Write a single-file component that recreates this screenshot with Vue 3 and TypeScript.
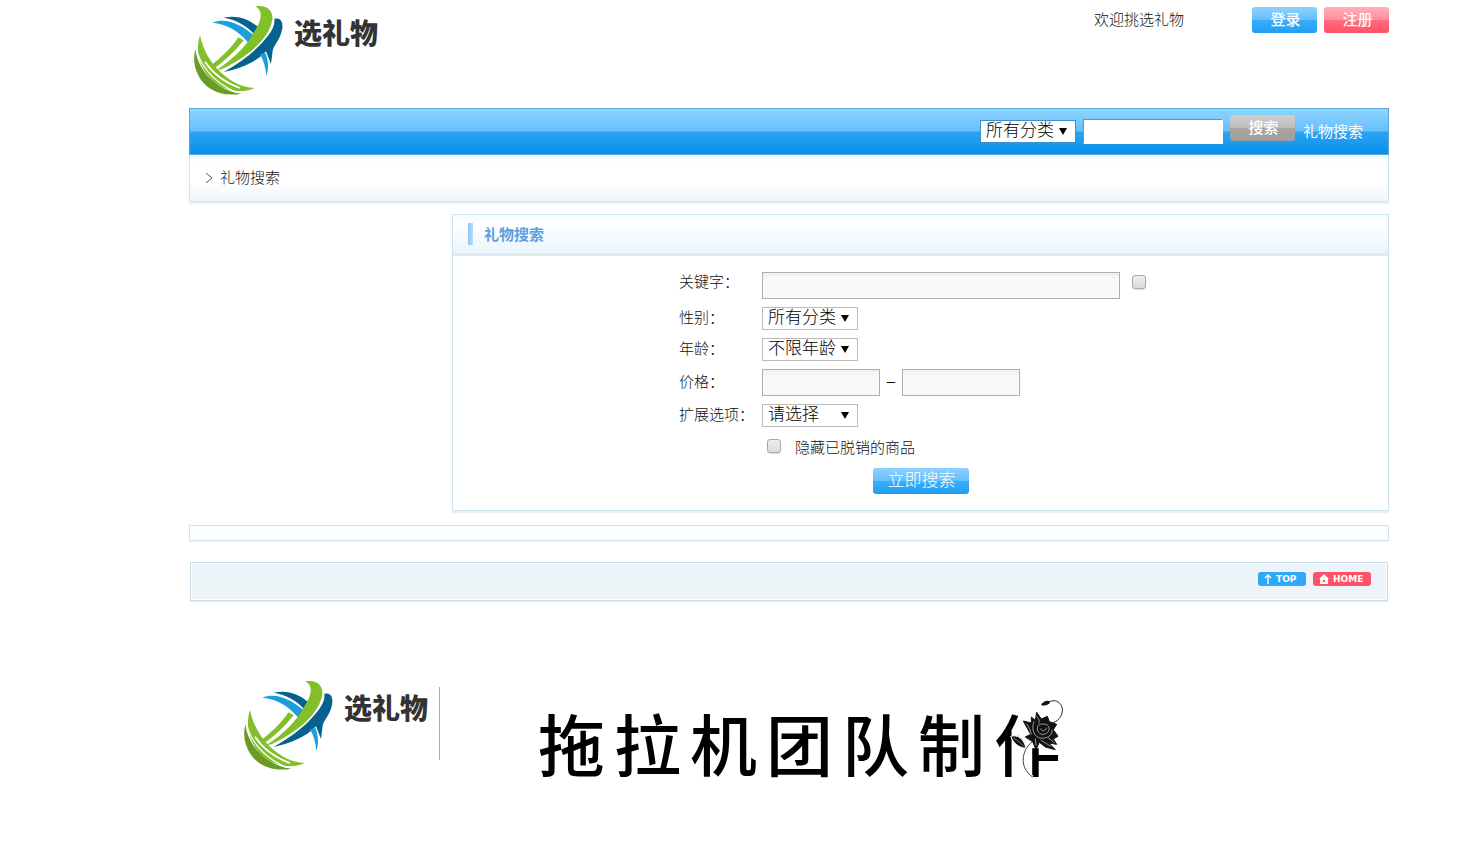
<script setup lang="ts">
import { defineComponent, h, ref } from 'vue'

const shapes: Array<[string, string]> = [
  ['#1a9fdc', 'M82 68C125 50 172 76 209 108L190 128C160 92 125 72 82 68Z'],
  ['#05628f', 'M116 53C155 44 194 56 222 84L209 104C185 76 155 60 116 53Z'],
  ['#83bf2b', 'M211 19C247 13 264 32 262 58C254 112 200 164 110 208L94 211C148 174 184 138 206 98C230 64 236 32 211 19Z'],
  ['#83bf2b', 'M160 112L176 121C150 154 120 182 88 205L80 195C113 168 141 142 160 112Z'],
  ['#05628f', 'M268 57C287 50 296 68 291 90C283 124 267 134 263 152L258 192L243 154C214 186 165 206 116 216C178 182 223 142 250 106C263 88 270 74 268 57Z'],
  ['#1a9fdc', 'M225 163L242 159C250 185 252 205 244 228C242 202 236 182 225 163Z'],
  ['#83bf2b', 'M45 105C54 150 76 188 110 220C140 246 168 262 209 264C166 284 116 272 80 240C42 202 30 152 45 105Z'],
  ['#6b9a25', 'M31 148C36 188 58 224 92 250C118 268 142 278 169 281C108 292 60 268 39 224C26 197 25 172 31 148Z'],
]

const BrandMark = defineComponent(() => () =>
  h(
    'svg',
    { viewBox: '12 0 288 300', width: 96, height: 100, 'aria-hidden': 'true' },
    [
      ...shapes.map(([fill, d]) => h('path', { fill, d })),
      h('path', { d: 'M33 138C40 188 80 246 156 278', fill: 'none', stroke: '#fff', 'stroke-width': 4 }),
      h('path', { d: 'M60 185C80 215 110 244 165 264', fill: 'none', stroke: '#fff', 'stroke-width': 5 }),
    ],
  ),
)

const category = ref('所有分类')
const gender = ref('所有分类')
const age = ref('不限年龄')
const extra = ref('请选择')
const credit = Array.from('拖拉机团队制作')
</script>

<template>
  <div class="page">
    <header class="top">
      <a class="brand" href="#"><BrandMark /><span class="brand-name">选礼物</span></a>
      <div class="account">
        <span class="welcome">欢迎挑选礼物</span>
        <button class="btn blue" type="button">登录</button>
        <button class="btn red" type="button">注册</button>
      </div>
    </header>

    <nav class="nav">
      <span class="select">
        <select v-model="category" aria-label="分类"><option>所有分类</option></select>
      </span>
      <input class="nav-input" type="text" aria-label="搜索">
      <button class="btn gray" type="button">搜索</button>
      <a class="nav-link" href="#">礼物搜索</a>
    </nav>

    <div class="crumb">
      <svg width="8" height="12" viewBox="0 0 8 12" aria-hidden="true"><path d="M1 1L7 6L1 11" fill="none" stroke="#555" /></svg>
      <span>礼物搜索</span>
    </div>

    <section class="panel">
      <h2 class="panel-title"><span>礼物搜索</span></h2>
      <form class="form" @submit.prevent>
        <div class="row first">
          <label for="kw">关键字：</label>
          <input id="kw" class="field wide" type="text">
          <input class="tick" type="checkbox" aria-label="扩展搜索">
        </div>
        <div class="row">
          <label for="gender">性别：</label>
          <span class="select"><select id="gender" v-model="gender"><option>所有分类</option></select></span>
        </div>
        <div class="row">
          <label for="age">年龄：</label>
          <span class="select"><select id="age" v-model="age"><option>不限年龄</option></select></span>
        </div>
        <div class="row">
          <label for="min">价格：</label>
          <input id="min" class="field" type="text">
          <span class="dash">–</span>
          <input class="field" type="text" aria-label="最高价格">
        </div>
        <div class="row">
          <label for="extra">扩展选项：</label>
          <span class="select"><select id="extra" v-model="extra"><option>请选择</option></select></span>
        </div>
        <div class="row hide-row">
          <input id="hide" class="tick" type="checkbox">
          <label for="hide">隐藏已脱销的商品</label>
        </div>
        <button class="btn blue submit" type="submit">立即搜索</button>
      </form>
    </section>

    <div class="strip"></div>

    <div class="footbar">
      <a class="chip chip-blue" href="#">
        <svg width="8" height="10" viewBox="0 0 8 10" aria-hidden="true"><path d="M4 10V1M1 4L4 1L7 4" fill="none" stroke="#fff" stroke-width="1.4" /></svg>
        <span>TOP</span>
      </a>
      <a class="chip chip-red" href="#">
        <svg width="10" height="10" viewBox="0 0 10 10" aria-hidden="true"><path d="M5 0L10 5H9V10H1V5H0ZM4 6V8H6V6Z" fill="#fff" fill-rule="evenodd" /></svg>
        <span>HOME</span>
      </a>
    </div>

    <footer class="foot">
      <a class="brand" href="#"><BrandMark /><span class="brand-name">选礼物</span></a>
      <span class="divider"></span>
      <p class="credit">
        <span v-for="c in credit" :key="c">{{ c }}</span>
        <svg class="flower" width="85" height="90" viewBox="0 0 255 270" aria-hidden="true">
          <path d="M98 46H236V178H166V160H128V150H98Z" fill="#fff" />
          <path d="M185 24C205 8 232 22 229 50C226 72 208 82 190 88" fill="none" stroke="#222" stroke-width="3" />
          <path d="M165 30C170 20 184 14 192 20C190 30 176 34 165 30Z" fill="#111" />
          <path d="M142 140C118 155 104 190 116 218C122 230 130 240 140 246" fill="none" stroke="#fff" stroke-width="9" />
          <path d="M144 136C116 155 104 190 116 218C122 230 130 240 140 246" fill="none" stroke="#444" stroke-width="3" />
          <path d="M74 124C94 118 114 130 120 160C100 158 84 148 74 124Z" fill="#111" stroke="#fff" stroke-width="3" />
          <path d="M82 129C94 135 104 144 113 154" fill="none" stroke="#aaa" stroke-width="2" />
          <path d="M152 52L166 72L184 64L190 80L212 88L202 104L216 124L202 132L212 148L188 144L208 164L178 156L160 142L150 164L140 140L118 126L134 118L112 78L136 84L136 66L148 76Z" fill="#111" stroke="#111" stroke-width="3" />
          <g fill="none" stroke="#ddd" stroke-width="2">
            <path d="M144 80C136 100 142 120 158 128C180 134 200 122 198 104" />
            <path d="M156 92C150 108 160 120 174 118C190 114 194 98 184 90C172 84 160 88 156 92Z" />
            <path d="M164 100C166 110 178 110 182 98M122 86C130 98 134 108 136 118M150 62C158 70 162 78 158 86" />
            <path d="M164 134C174 142 182 146 194 154M186 128C194 134 200 138 206 144M148 130L150 152" />
          </g>
        </svg>
      </p>
    </footer>
  </div>
</template>

<style>
body {
  margin: 0;
  background: #fff;
}
</style>

<style scoped>
.page {
  box-sizing: border-box;
  padding: 0 87px 0 189px;
  font: 300 15px/20px "Liberation Sans", "Noto Sans CJK SC", sans-serif;
  color: #111;
}

button,
input,
select {
  box-sizing: border-box;
  margin: 0;
  font-family: inherit;
}

a {
  text-decoration: none;
}

.top {
  display: flex;
  justify-content: space-between;
  align-items: flex-start;
  height: 108px;
}

.brand {
  display: flex;
  align-items: flex-start;
  gap: 9px;
}

.brand-name {
  padding-top: 20px;
  font-size: 28px;
  line-height: 30px;
  font-weight: 900;
  color: #333;
}

.account {
  display: flex;
  align-items: center;
  gap: 7px;
  padding-top: 7px;
}

.welcome {
  margin-right: 61px;
}

.btn {
  width: 65px;
  height: 26px;
  padding: 0 0 0 4px;
  border: 0;
  border-radius: 3px;
  color: #fff;
  font-size: 16px;
  line-height: 24px;
  font-weight: 700;
}

.blue {
  background: linear-gradient(#8fd1ff, #66bffd 48%, #3badf8 52%, #1f9ff5);
}

.red {
  background: linear-gradient(#ffb0bb, #ff8e9c 48%, #ff6b7e 52%, #ff5268);
}

.gray {
  margin: 0 1px 8px 0;
  background: linear-gradient(#cfcfcf, #bdbdbd 48%, #a8a5a3 52%, #a19d9a);
}

.account .btn,
.gray {
  padding-left: 2px;
  font-size: 15px;
  font-weight: 500;
}

.nav {
  box-sizing: border-box;
  display: flex;
  align-items: center;
  justify-content: flex-end;
  gap: 7px;
  height: 47px;
  padding: 0 25px 0 0;
  border: 1px solid #5aa9de;
  background: linear-gradient(#8fd4ff, #66c0fc 48%, #2ba4f3 52%, #0690ea);
}

.nav-input {
  width: 140px;
  height: 25px;
  border: 1px solid #3f9fe0;
  border-right-color: #fff;
  border-bottom-color: #fff;
  background: #fff;
}

.nav-link {
  color: #fff;
  font-weight: 400;
}

.select {
  position: relative;
  display: inline-flex;
}

.select::after {
  content: "";
  position: absolute;
  top: 8px;
  right: 9px;
  border: 4px solid transparent;
  border-top: 7px solid #000;
  border-bottom: 0;
  pointer-events: none;
}

select {
  width: 96px;
  height: 23px;
  padding: 0 0 2px 5px;
  border: 1px solid #bbb;
  border-radius: 0;
  appearance: none;
  background: #fff;
  color: #000;
  font-size: 17px;
  line-height: 20px;
  font-weight: 300;
}

.nav select {
  border-color: #3f8fcb;
}

.crumb {
  box-sizing: border-box;
  display: flex;
  align-items: center;
  gap: 7px;
  height: 47px;
  padding: 0 0 0 15px;
  border: 1px solid #cfe3ee;
  border-top: 0;
  background: linear-gradient(#eefaff, #fff 16%, #fff 60%, #eef6fd);
  box-shadow: 0 2px 1px #eef1f4;
}

.panel {
  box-sizing: border-box;
  margin: 12px 0 0 263px;
  border: 1px solid #cde4ef;
  box-shadow: 0 2px 1px #eaf0f4;
}

.panel-title {
  display: flex;
  align-items: center;
  gap: 11px;
  height: 38px;
  margin: 0;
  padding: 0 0 0 15px;
  border-bottom: 3px solid #e0eaf2;
  background: linear-gradient(#f4fbff, #fff 25%, #eaf5fd);
  color: #5e9fe2;
  font-size: 15px;
  font-weight: 700;
}

.panel-title span {
  padding-top: 2px;
}

.panel-title::before {
  content: "";
  width: 5px;
  height: 22px;
  background: linear-gradient(90deg, #8fc8f5, #b8dcf8);
}

.form {
  display: flex;
  flex-direction: column;
  gap: 8px;
  width: 483px;
  margin: 0 auto;
  padding: 16px 0;
}

.row {
  display: flex;
  align-items: center;
}

.row > label:first-child {
  width: 83px;
  padding-bottom: 2px;
}

.first {
  align-items: flex-start;
}

.first .tick {
  margin: 3px 0 0 12px;
}

.field {
  width: 118px;
  height: 27px;
  border: 1px solid #b0b0b0;
  background: linear-gradient(#efefef, #f9f9f9 25%);
}

.wide {
  width: 358px;
}

.dash {
  width: 22px;
  padding-bottom: 4px;
  text-align: center;
}

.tick {
  width: 14px;
  height: 14px;
  border: 1px solid #aaa;
  border-radius: 3px;
  appearance: none;
  background: linear-gradient(#ededed, #dcdcdc);
  box-shadow: 0 1px 1px #ddd;
}

.hide-row {
  gap: 14px;
  height: 25px;
  padding-left: 88px;
}

.hide-row .tick {
  margin-bottom: 3px;
}

.submit {
  align-self: center;
  width: 96px;
  padding: 0 0 0 2px;
  font-size: 17px;
  font-weight: 300;
}

.strip {
  box-sizing: border-box;
  height: 16px;
  margin-top: 14px;
  border: 1px solid #cfe2ea;
  border-radius: 1px;
  background: #fbfeff;
  box-shadow: 0 1px 1px #eef3f6;
}

.footbar {
  box-sizing: border-box;
  display: flex;
  justify-content: flex-end;
  gap: 7px;
  height: 39px;
  margin: 21px 1px 0;
  padding: 9px 16px 0 0;
  border: 1px solid #cddde8;
  background: linear-gradient(#ecf4fc, #eef4f7);
  box-shadow: inset 0 0 0 1px #fff, 0 1px 1px #e8edf1;
}

.chip {
  box-sizing: border-box;
  display: flex;
  align-items: center;
  height: 14px;
  border-radius: 3px;
  color: #fff;
  font: bold 9px/14px "DejaVu Sans", sans-serif;
}

.chip-blue {
  gap: 4px;
  width: 48px;
  padding-left: 6px;
  background: #31a7f7;
}

.chip-red {
  gap: 4px;
  width: 58px;
  padding-left: 6px;
  background: #ff5168;
}

.foot {
  display: flex;
  align-items: flex-start;
  padding: 74px 0 0 50px;
}

.divider {
  width: 1px;
  height: 73px;
  margin: 12px 98px 0 11px;
  background: #aaa;
}

.credit {
  position: relative;
  display: flex;
  gap: 9px;
  margin: 26px 0 0;
  color: #000;
  font-size: 67px;
  line-height: 94px;
  font-weight: 500;
}

.flower {
  position: absolute;
  top: -6px;
  right: -10px;
}
</style>
